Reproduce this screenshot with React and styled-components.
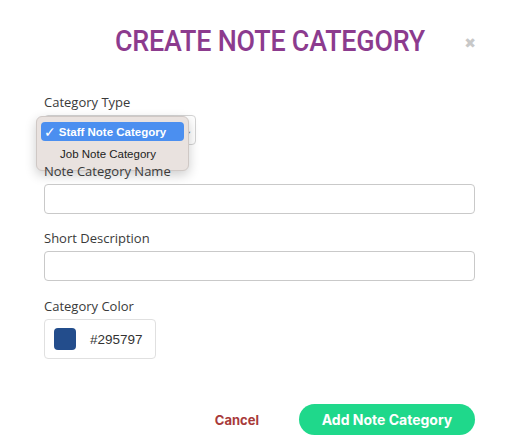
import React from "react";
import styled, { createGlobalStyle } from "styled-components";

const Global = createGlobalStyle`
  html, body { margin: 0; padding: 0; background: #fff; }
  body { font-family: "Open Sans", "Noto Sans", sans-serif; }
  * { box-sizing: border-box; }
`;

const Modal = styled.div`
  width: 520px;
  height: 447px;
  background: #fff;
  position: relative;
  overflow: hidden;
`;

const Header = styled.div`
  display: flex;
  align-items: flex-start;
  justify-content: space-between;
  padding: 23px 44px 0 115px;
  height: 62px;
`;

const Title = styled.h1`
  margin: 0;
  font-family: "Roboto", "Noto Sans", sans-serif;
  font-weight: 500;
  font-size: 29.5px;
  letter-spacing: -0.2px;
  color: #8c3b8e;
  line-height: 36px;
  white-space: nowrap;
  transform: scaleX(0.91);
  transform-origin: left center;
`;

const Close = styled.span`
  color: #c8c8c8;
  font-size: 14px;
  font-weight: 700;
  font-family: "DejaVu Sans", sans-serif;
  margin-top: 12px;
`;

const Form = styled.div`
  display: flex;
  flex-direction: column;
  padding: 31px 45px 0 44px;
`;

const Field = styled.div`
  display: flex;
  flex-direction: column;
  gap: 4px;
  margin-bottom: ${(p) => p.$mb ?? 16}px;
  position: relative;
`;

const Label = styled.label`
  font-size: 13px;
  color: #3a3a3a;
  line-height: 18px;
`;

const Input = styled.div`
  height: 30px;
  border: 1px solid #c9c9c9;
  border-radius: 4px;
  background: #fff;
`;

const Select = styled.div`
  width: 152px;
  height: 30px;
  border: 1px solid #d4d4d4;
  border-radius: 4px;
  display: flex;
  align-items: center;
  justify-content: flex-end;
  padding-right: 3px;
  color: #777;
  font-size: 10px;
`;

const Menu = styled.div`
  position: absolute;
  left: -8px;
  top: 23px;
  width: 153px;
  background: #e9e2df;
  border: 1px solid #cfc8c5;
  border-radius: 6px;
  box-shadow: 0 4px 12px rgba(0, 0, 0, 0.2);
  padding: 5px 4px 4px 4px;
  font-family: "Liberation Sans", "Inter", sans-serif;
  font-size: 11.5px;
  display: flex;
  flex-direction: column;
`;

const Option = styled.div`
  height: 19px;
  display: flex;
  align-items: center;
  padding-left: ${(p) => (p.$active ? 3 : 19)}px;
  border-radius: 4px;
  background: ${(p) => (p.$active ? "#4b8ff0" : "transparent")};
  color: ${(p) => (p.$active ? "#fff" : "#222")};
  font-weight: ${(p) => (p.$active ? 600 : 400)};
  margin-bottom: 3px;
  gap: 3px;
`;

const Check = styled.span`
  font-size: 14px;
  font-weight: 700;
  font-family: "DejaVu Sans", sans-serif;
  line-height: 1;
`;

const ColorBox = styled.div`
  width: 112px;
  height: 40px;
  border: 1px solid #e0e0e0;
  border-radius: 4px;
  display: flex;
  align-items: center;
  padding-left: 9px;
  gap: 14px;
  font-size: 13.5px;
  color: #333;
  font-family: "Liberation Sans", "Inter", sans-serif;
`;

const Swatch = styled.div`
  width: 22px;
  height: 22px;
  border-radius: 4px;
  background: ${(p) => p.$color};
`;

const Footer = styled.div`
  display: flex;
  justify-content: flex-end;
  align-items: center;
  gap: 40px;
  padding: 45px 45px 0 0;
`;

const Cancel = styled.button`
  border: none;
  background: none;
  color: #a83a3a;
  font-family: "Inter", "Lato", sans-serif;
  font-weight: 700;
  font-size: 13px;
  padding: 0;
`;

const Primary = styled.button`
  border: none;
  background: #1fd88b;
  color: #fff;
  font-family: "Inter", "Lato", sans-serif;
  font-weight: 700;
  font-size: 14px;
  height: 31px;
  width: 176px;
  border-radius: 16px;
`;

export default function App() {
  return (
    <>
      <Global />
      <Modal>
        <Header>
          <Title>CREATE NOTE CATEGORY</Title>
          <Close>✖</Close>
        </Header>
        <Form>
          <Field $mb={17}>
            <Label>Category Type</Label>
            <Select>⌄</Select>
            <Menu>
              <Option $active>
                <Check>✓</Check>Staff Note Category
              </Option>
              <Option>Job Note Category</Option>
            </Menu>
          </Field>
          <Field $mb={15}>
            <Label>Note Category Name</Label>
            <Input />
          </Field>
          <Field>
            <Label>Short Description</Label>
            <Input />
          </Field>
          <Field $mb={0}>
            <Label>Category Color</Label>
            <ColorBox>
              <Swatch $color="#234d8c" />
              #295797
            </ColorBox>
          </Field>
        </Form>
        <Footer>
          <Cancel>Cancel</Cancel>
          <Primary>Add Note Category</Primary>
        </Footer>
      </Modal>
    </>
  );
}
